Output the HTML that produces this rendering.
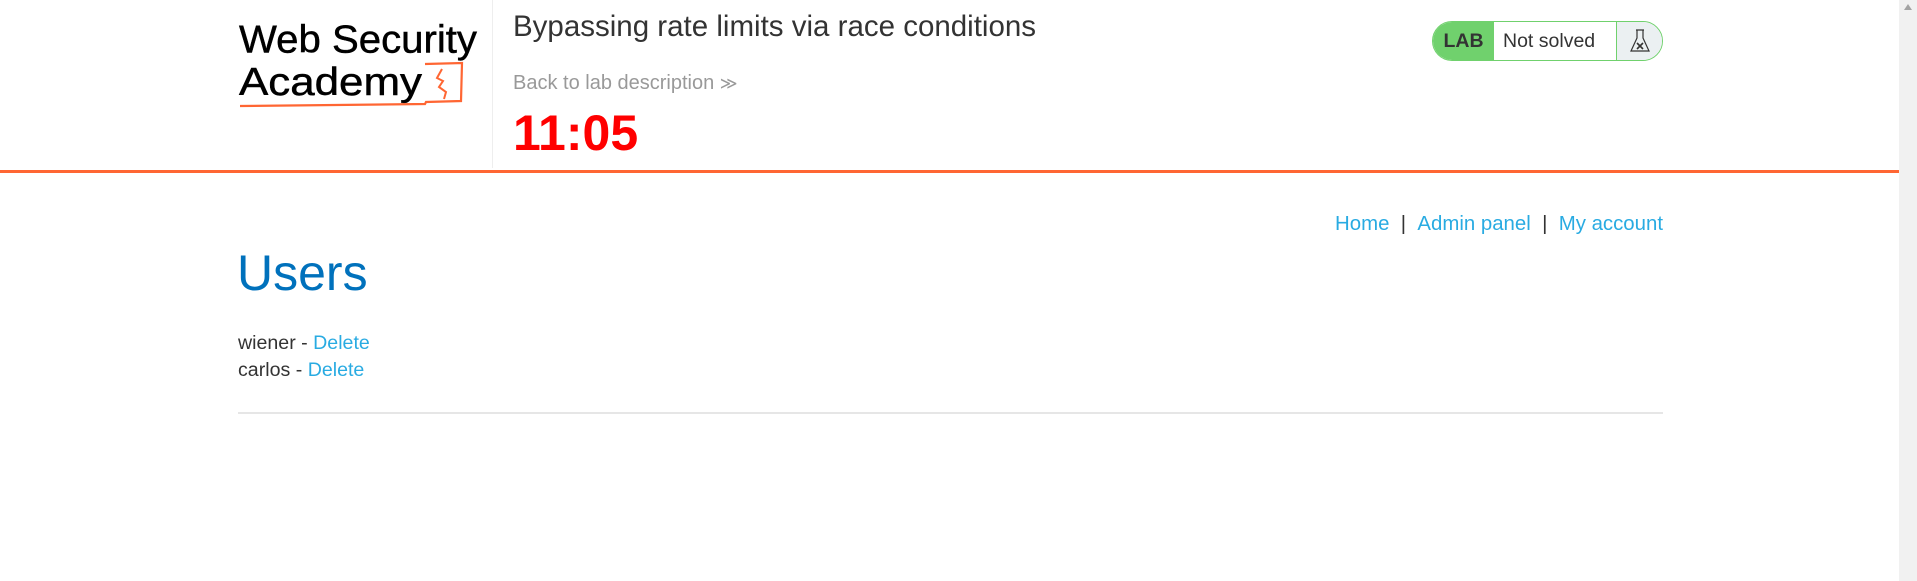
<!DOCTYPE html>
<html><head><meta charset="utf-8"><style>
html,body{margin:0;padding:0;background:#fff;width:1917px;height:581px;overflow:hidden;font-family:"Liberation Sans",Arial,sans-serif}
.sb{position:absolute;right:0;top:0;width:18px;height:581px;background:#f1f1f1}
.sb:before{content:"";position:absolute;left:5px;top:4px;border-left:4px solid transparent;border-right:4px solid transparent;border-bottom:6px solid #a3a3a3}
.div{position:absolute;left:492px;top:0;width:1px;height:168px;background:#eee}
.orange{position:absolute;left:0;top:170px;width:1899px;height:3px;background:#ff6633}
.title{position:absolute;left:513px;top:10px;font-size:29.5px;color:#333;white-space:nowrap}
.back{position:absolute;left:513px;top:72px;font-size:20px;color:#999;white-space:nowrap}
.timer{position:absolute;left:513px;top:104px;font-size:50px;font-weight:bold;color:#ff0000}
.badge{position:absolute;left:1432px;top:21px;width:229px;height:38px;border:1px solid #70d16d;border-radius:20px;overflow:hidden;display:flex;font-size:19.5px}
.badge .l{width:61px;background:#70d16d;color:#333;font-weight:bold;display:flex;align-items:center;justify-content:center}
.badge .m{width:123px;background:#fff;color:#333;display:flex;align-items:center;padding-left:9px;box-sizing:border-box;border-right:1px solid #70d16d}
.badge .r{flex:1;background:#ebf0f2;display:flex;align-items:center;justify-content:center}
.nav{position:absolute;right:254px;top:213px;font-size:20.4px;color:#333;white-space:nowrap}
.nav a{color:#29abe2;text-decoration:none}
h1{position:absolute;left:237px;top:244px;margin:0;font-weight:normal;font-size:50px;color:#0071bc}
.users{position:absolute;left:238px;top:330px;font-size:19.6px;color:#333;line-height:27px}
.users a{color:#29abe2}
.hr{position:absolute;left:238px;top:412px;width:1425px;height:2px;background:#e6e6e6}
</style></head><body>
<svg style="position:absolute;left:236px;top:18px" width="256" height="94" viewBox="0 0 256 94">
<g transform="scale(1,1.15)">
<text x="3" y="30" font-family="Liberation Sans,sans-serif" font-size="34" fill="#000" stroke="#000" stroke-width="0.4" textLength="238" lengthAdjust="spacingAndGlyphs">Web Security</text>
<text x="3" y="67" font-family="Liberation Sans,sans-serif" font-size="34" fill="#000" stroke="#000" stroke-width="0.4" textLength="183" lengthAdjust="spacingAndGlyphs">Academy</text>
</g>
<path d="M189 46 L226 45 L225 83 L190 84 L189 86 L4 88" fill="none" stroke="#ff6633" stroke-width="2.2"/>
<path d="M206 51 L201 60 L207 63 L203 69 L210 74 L208 81" fill="none" stroke="#ff6633" stroke-width="2"/>
</svg>
<div class="div"></div>
<div class="title">Bypassing rate limits via race conditions</div>
<div class="back">Back to lab description <span style="font-size:17px">&#8811;</span></div>
<div class="timer">11:05</div>
<div class="badge"><div class="l">LAB</div><div class="m">Not solved</div><div class="r">
<svg width="22" height="26" viewBox="0 0 22 26"><path d="M7 2 H15 M8 2 V10 L2 23 H20 L14 10 V2" fill="none" stroke="#333" stroke-width="1.2"/><path d="M8 15 L14 21 M14 15 L8 21" stroke="#333" stroke-width="1.6"/></svg>
</div></div>
<div class="orange"></div>
<div class="nav"><a>Home</a>&nbsp;&nbsp;|&nbsp;&nbsp;<a>Admin panel</a>&nbsp;&nbsp;|&nbsp;&nbsp;<a>My account</a></div>
<h1>Users</h1>
<div class="users">wiener - <a>Delete</a><br>carlos - <a>Delete</a></div>
<div class="hr"></div>
<div class="sb"></div>
</body></html>
